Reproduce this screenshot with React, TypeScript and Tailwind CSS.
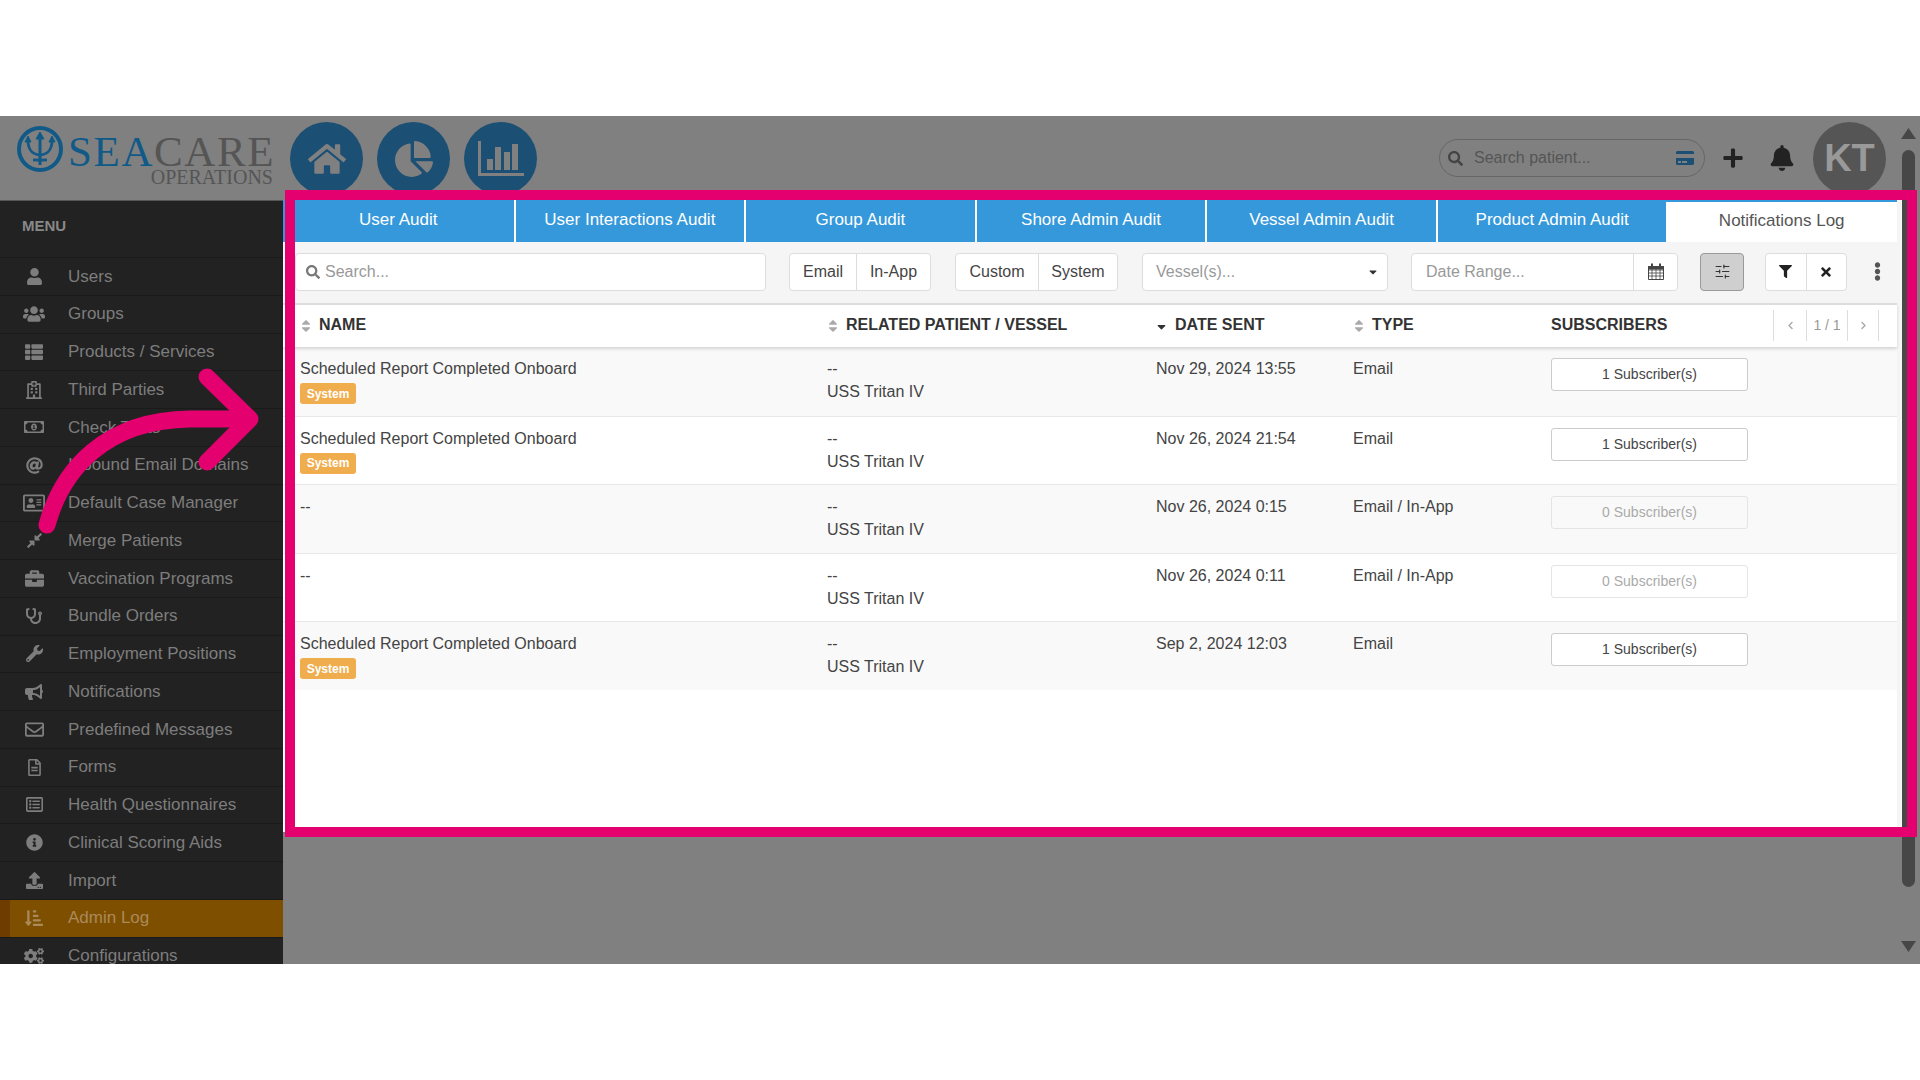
import { ReactNode } from "react";
import {
  FaUser,
  FaUsers,
  FaRegHospital,
  FaRegMoneyBillAlt,
  FaAt,
  FaRegAddressCard,
  FaCompressAlt,
  FaBriefcase,
  FaStethoscope,
  FaWrench,
  FaBullhorn,
  FaRegEnvelope,
  FaRegFileAlt,
  FaRegListAlt,
  FaInfoCircle,
  FaUpload,
  FaSortAmountDownAlt,
  FaCogs,
  FaHome,
  FaChartPie,
  FaSearch,
  FaCreditCard,
  FaPlus,
  FaBell,
  FaFilter,
  FaTimes,
  FaEllipsisV,
  FaChevronLeft,
  FaChevronRight,
  FaSortDown,
  FaCaretDown,
  FaCaretUp,
  FaThList,
} from "react-icons/fa";
import { SlidersHorizontal } from "lucide-react";

const menu: { label: string; icon: ReactNode }[] = [
  { label: "Users", icon: <FaUser size={17} /> },
  { label: "Groups", icon: <FaUsers size={22} /> },
  { label: "Products / Services", icon: <FaThList size={18} /> },
  { label: "Third Parties", icon: <FaRegHospital size={18} /> },
  { label: "Check Tests", icon: <FaRegMoneyBillAlt size={20} /> },
  { label: "Inbound Email Domains", icon: <FaAt size={17} /> },
  { label: "Default Case Manager", icon: <FaRegAddressCard size={22} /> },
  { label: "Merge Patients", icon: <FaCompressAlt size={17} /> },
  { label: "Vaccination Programs", icon: <FaBriefcase size={19} /> },
  { label: "Bundle Orders", icon: <FaStethoscope size={16} /> },
  { label: "Employment Positions", icon: <FaWrench size={17} /> },
  { label: "Notifications", icon: <FaBullhorn size={18} /> },
  { label: "Predefined Messages", icon: <FaRegEnvelope size={19} /> },
  { label: "Forms", icon: <FaRegFileAlt size={17} /> },
  { label: "Health Questionnaires", icon: <FaRegListAlt size={17} /> },
  { label: "Clinical Scoring Aids", icon: <FaInfoCircle size={17} /> },
  { label: "Import", icon: <FaUpload size={17} /> },
  { label: "Admin Log", icon: <FaSortAmountDownAlt size={18} /> },
  { label: "Configurations", icon: <FaCogs size={20} /> },
];

const tabs = [
  "User Audit",
  "User Interactions Audit",
  "Group Audit",
  "Shore Admin Audit",
  "Vessel Admin Audit",
  "Product Admin Audit",
  "Notifications Log",
];

const rows = [
  { name: "Scheduled Report Completed Onboard", system: true, date: "Nov 29, 2024 13:55", type: "Email", subs: 1 },
  { name: "Scheduled Report Completed Onboard", system: true, date: "Nov 26, 2024 21:54", type: "Email", subs: 1 },
  { name: "--", system: false, date: "Nov 26, 2024 0:15", type: "Email / In-App", subs: 0 },
  { name: "--", system: false, date: "Nov 26, 2024 0:11", type: "Email / In-App", subs: 0 },
  { name: "Scheduled Report Completed Onboard", system: true, date: "Sep 2, 2024 12:03", type: "Email", subs: 1 },
];

function Logo() {
  return (
    <div className="flex items-start w-[273px] ml-[17px] mt-[10px] shrink-0">
      <svg width="46" height="46" viewBox="0 0 46 46" fill="none" stroke="#115a87" className="shrink-0">
        <circle cx="23" cy="23" r="21" strokeWidth="4" />
        <path d="M23 8v31" strokeWidth="3" />
        <path d="M23 6l-4 7h8z" fill="#115a87" strokeWidth="1" />
        <path d="M11 14c0 9 3 14 12 15 9-1 12-6 12-15" strokeWidth="2.8" />
        <path d="M11 10l-3 6h6zM35 10l-3 6h6z" fill="#115a87" strokeWidth="1" />
        <path d="M16 34h14" strokeWidth="2.8" />
      </svg>
      <div className="ml-[5px] font-['Liberation_Serif',serif] text-[#555555] text-right w-[205px]">
        <div className="text-[43px] leading-[32px] mt-[10px] whitespace-nowrap tracking-[1.6px]">
          <span className="text-[#115a87]">SEA</span>CARE
        </div>
        <div className="text-[20px] leading-[20px] -mt-[1px] whitespace-nowrap">OPERATIONS</div>
      </div>
    </div>
  );
}

function Circle({ children }: { children: ReactNode }) {
  return (
    <div className="w-[73px] h-[73px] rounded-full bg-[#1c4f74] flex items-center justify-center text-[#808080] shrink-0">
      {children}
    </div>
  );
}

function SortHead({ label, active }: { label: string; active?: boolean }) {
  return (
    <div className="flex items-center">
      {active ? (
        <FaSortDown size={14} className="text-[#333] w-[11px] mr-[8px] -mt-[2px]" />
      ) : (
        <span className="flex flex-col text-[#aaaaaa] w-[11px] mr-[8px] items-start">
          <FaCaretUp size={14} className="-mb-[7px] -ml-[1px]" />
          <FaCaretDown size={14} className="-ml-[1px]" />
        </span>
      )}
      <span>{label}</span>
    </div>
  );
}

function GroupButton({ children, last }: { children: ReactNode; last?: boolean }) {
  return (
    <div
      className={`h-full flex items-center justify-center flex-1 ${last ? "" : "border-r border-[#dddddd]"}`}
    >
      {children}
    </div>
  );
}

export default function App() {
  return (
    <div className="relative w-[1920px] h-[1080px] bg-white overflow-hidden font-['Liberation_Sans',Arial,sans-serif] text-[16px]">
      <div className="h-[116px]" />
      <div className="h-[848px] bg-[#808080] flex flex-col overflow-hidden">
        {/* Top bar */}
        <header className="h-[84px] shrink-0 flex items-start overflow-visible relative z-0">
          <Logo />
          <div className="mt-[6px] flex items-center gap-[14px]">
            <Circle>
              <FaHome size={38} />
            </Circle>
            <Circle>
              <FaChartPie size={38} />
            </Circle>
            <Circle>
              <svg width="46" height="36" viewBox="0 0 46 36" fill="currentColor">
                <path d="M0 0h3v32h43v3H0z" />
                <rect x="9" y="18" width="6" height="11" />
                <rect x="17" y="6" width="6" height="23" />
                <rect x="26" y="11" width="6" height="18" />
                <rect x="34" y="3" width="6" height="26" />
              </svg>
            </Circle>
          </div>
          <div className="ml-auto flex items-start">
            <div className="mt-[23px] w-[266px] h-[38px] rounded-full border border-[#666666] flex items-center pl-[8px] pr-[10px] text-[#444444]">
              <FaSearch size={15} />
              <span className="ml-[11px] text-[16px] text-[#555555] flex-1">Search patient...</span>
              <FaCreditCard size={18} className="text-[#1c4f74]" />
            </div>
            <FaPlus size={22} className="ml-[17px] mt-[31px] text-[#222222]" />
            <FaBell size={26} className="ml-[25px] mt-[29px] text-[#222222]" />
            <div className="ml-[18px] mt-[6px] w-[73px] h-[73px] rounded-full bg-[#555555] flex items-center justify-center text-[#999999] font-bold text-[38px]">
              KT
            </div>
            <div className="w-[34px]" />
          </div>
        </header>

        <div className="flex-1 flex min-h-0">
          {/* Sidebar */}
          <aside className="w-[283px] shrink-0 bg-[#222222] border-t border-[#555555] overflow-hidden relative z-10">
            <div className="h-[56px] pl-[22px] pt-[16px] text-[#888888] font-bold text-[15px] leading-[18px]">MENU</div>
            {menu.map((m) => {
              const active = m.label === "Admin Log";
              return (
                <div
                  key={m.label}
                  className={`h-[37.75px] flex items-center border-t border-[#1a1a1a] ${
                    active ? "bg-[#7f4f00] text-[#a98a5b]" : "text-[#7d7d7d]"
                  }`}
                >
                  <div className={`w-[10px] self-stretch ${active ? "bg-[#6f3c00]" : ""}`} />
                  <div className="w-[48px] flex justify-center">{m.icon}</div>
                  <span className="ml-[10px] text-[17px] whitespace-nowrap">{m.label}</span>
                </div>
              );
            })}
          </aside>

          {/* Main panel */}
          <main className="w-[1619px] h-[632px] bg-[#f5f5f5] pr-[5px] shrink-0 relative z-10">
            <div className="bg-white h-full flex flex-col">
              <div className="grid grid-cols-7 h-[42px] shrink-0 text-[17px] leading-[20px]">
                {tabs.map((t, i) => (
                  <div
                    key={t}
                    className={
                      i === 6
                        ? "flex items-center justify-center pb-[2px] bg-white text-[#555555] border-t-2 border-[#3498db]"
                        : i === 0
                          ? "flex items-center justify-center pb-[2px] bg-[#3498db] text-white"
                          : "flex items-center justify-center pb-[2px] bg-[#3498db] text-white border-l-2 border-white"
                    }
                  >
                    {t}
                  </div>
                ))}
              </div>

              {/* Toolbar */}
              <div className="h-[61px] shrink-0 bg-[#f5f5f5] pl-[12px] pb-[2px] flex items-center text-[16px] text-[#444444]">
                <div className="w-[471px] h-[38px] bg-white border border-[#dddddd] rounded-[4px] flex items-center pl-[10px] text-[#999999]">
                  <FaSearch size={14} className="text-[#777777]" />
                  <span className="ml-[5px]">Search...</span>
                </div>
                <div className="ml-[23px] w-[142px] h-[38px] bg-white border border-[#dddddd] rounded-[4px] flex">
                  <div className="w-[67px] h-full flex items-center justify-center border-r border-[#dddddd]">Email</div>
                  <div className="flex-1 h-full flex items-center justify-center">In-App</div>
                </div>
                <div className="ml-[24px] w-[163px] h-[38px] bg-white border border-[#dddddd] rounded-[4px] flex">
                  <div className="w-[83px] h-full flex items-center justify-center border-r border-[#dddddd]">Custom</div>
                  <div className="flex-1 h-full flex items-center justify-center">System</div>
                </div>
                <div className="ml-[24px] w-[246px] h-[38px] bg-white border border-[#dddddd] rounded-[4px] flex items-center pl-[13px] pr-[8px] text-[#999999]">
                  <span className="flex-1">Vessel(s)...</span>
                  <FaCaretDown size={12} className="text-[#333333]" />
                </div>
                <div className="ml-[23px] w-[267px] h-[38px] bg-white border border-[#dddddd] rounded-[4px] flex items-center text-[#999999]">
                  <span className="flex-1 pl-[14px]">Date Range...</span>
                  <div className="w-[44px] h-full flex items-center justify-center border-l border-[#dddddd]">
                    <svg width="16" height="17" viewBox="0 0 16 17" fill="none" stroke="#444444">
                      <path d="M0.5 3.5h15v13h-15z" />
                      <path d="M0.5 7h15M0.5 10h15M0.5 13h15M4 3.5v13M8 3.5v13M12 3.5v13" strokeWidth="0.8" />
                      <path d="M0.5 3.5h15V6h-15z" fill="#444444" />
                      <path d="M4 0.5v4M12 0.5v4" strokeWidth="2" />
                    </svg>
                  </div>
                </div>
                <div className="ml-[22px] w-[44px] h-[38px] bg-[#cfcfcf] border border-[#999999] rounded-[4px] flex items-center justify-center">
                  <SlidersHorizontal size={17} strokeWidth={1.6} className="text-[#333333]" />
                </div>
                <div className="ml-[21px] w-[82px] h-[38px] bg-white border border-[#dddddd] rounded-[4px] flex text-[#222222]">
                  <GroupButton>
                    <FaFilter size={13} />
                  </GroupButton>
                  <GroupButton last>
                    <FaTimes size={14} />
                  </GroupButton>
                </div>
                <FaEllipsisV size={19} className="ml-[21px] text-[#555555]" />
              </div>

              {/* Table head */}
              <div className="h-[44px] shrink-0 border-t-[2px] border-[#dddddd] pl-[17px] pb-[2px] grid grid-cols-[527px_329px_197px_198px_1fr] items-center font-bold text-[#333333] shadow-[0_2px_3px_rgba(0,0,0,0.15)] relative">
                <SortHead label="NAME" />
                <SortHead label="RELATED PATIENT / VESSEL" />
                <SortHead label="DATE SENT" active />
                <SortHead label="TYPE" />
                <div className="flex items-center">
                  <span className="w-[222px]">SUBSCRIBERS</span>
                  <div className="h-[31px] flex items-center border-x border-[#dddddd] text-[#999999] font-normal text-[14px]">
                    <div className="w-[32px] flex justify-center">
                      <FaChevronLeft size={9} className="text-[#aaaaaa]" />
                    </div>
                    <div className="w-[42px] h-full flex items-center justify-center border-x border-[#dddddd]">1 / 1</div>
                    <div className="w-[30px] flex justify-center">
                      <FaChevronRight size={9} className="text-[#aaaaaa]" />
                    </div>
                  </div>
                </div>
              </div>

              {/* Rows */}
              {rows.map((r, i) => (
                <div
                  key={i}
                  className={`h-[68.6px] shrink-0 pl-[17px] pt-[10px] grid grid-cols-[527px_329px_197px_198px_1fr] items-start text-[16px] leading-[23px] text-[#444444] ${
                    i % 2 === 0 ? "bg-[#f9f9f9]" : "bg-white"
                  } ${i > 0 ? "border-t border-[#e8e8e8]" : ""}`}
                >
                  <div>
                    <div>{r.name}</div>
                    {r.system && (
                      <div className="mt-[3px] w-[56px] h-[21px] bg-[#f0ad4e] rounded-[3px] flex items-center justify-center text-white font-bold text-[12px] leading-none">
                        System
                      </div>
                    )}
                  </div>
                  <div>
                    <div>--</div>
                    <div>USS Tritan IV</div>
                  </div>
                  <div>{r.date}</div>
                  <div>{r.type}</div>
                  <div
                    className={`w-[197px] h-[33px] mt-[1px] border rounded-[3px] flex items-center justify-center text-[14px] ${
                      r.subs > 0
                        ? "bg-white border-[#cccccc] text-[#444444]"
                        : "bg-transparent border-[#e4e4e4] text-[#aaaaaa]"
                    }`}
                  >
                    {r.subs} Subscriber(s)
                  </div>
                </div>
              ))}
            </div>
          </main>

          {/* Scrollbar */}
          <div className="w-[18px] shrink-0 flex flex-col items-start relative -mt-[84px] pt-[12px]">
            <svg width="15" height="11" viewBox="0 0 15 11" fill="#474747" className="-ml-[1px]">
              <path d="M7.5 0L15 11H0z" />
            </svg>
            <div className="w-[13px] h-[737px] mt-[11px] bg-[#474747] rounded-full" />
            <div className="flex-1" />
            <svg width="15" height="11" viewBox="0 0 15 11" fill="#474747" className="-ml-[1px] mb-[12px]">
              <path d="M7.5 11L15 0H0z" />
            </svg>
          </div>
        </div>
      </div>

      {/* Highlight rectangle and arrow from the tutorial overlay */}
      <div className="absolute left-[285px] top-[190px] w-[1632px] h-[647px] border-[10px] border-[#e4006f] pointer-events-none z-20" />
      <svg className="absolute left-0 top-0 z-20 pointer-events-none" width="300" height="560" fill="none" stroke="#e4006f" strokeWidth="17" strokeLinecap="round" strokeLinejoin="round">
        <path d="M47 525C62 470 105 420 190 419L247 419" />
        <path d="M207 377L250 419L207 462" />
      </svg>
    </div>
  );
}
